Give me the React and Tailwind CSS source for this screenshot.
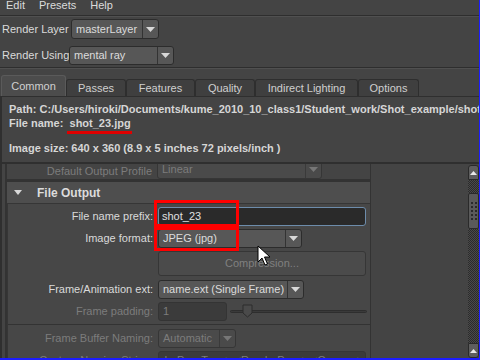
import React from 'react';

const font = { fontFamily: '"Liberation Sans", Arial, sans-serif' };

const Arrow = ({ dim }) => (
  <svg width="9" height="5" viewBox="0 0 9 5">
    <path d="M0 0 H9 L4.5 5 Z" fill={dim ? '#777' : '#d8d8d8'} />
  </svg>
);

const Dropdown = ({ value, width, dim, h = 'h-[19px]' }) => (
  <div
    className={`flex shrink-0 ${h} ${width} rounded-[3px] border ${
      dim ? 'border-[#363636] bg-[#4a4a4a] text-[#7c7c7c]' : 'border-[#2c2c2c] bg-[#575757] text-[#dcdcdc]'
    }`}
  >
    <div className="flex flex-1 items-center overflow-hidden whitespace-nowrap pl-[4px]">{value}</div>
    <div className={`flex w-[16px] items-center justify-center border-l ${dim ? 'border-[#3a3a3a]' : 'border-[#333]'}`}>
      <Arrow dim={dim} />
    </div>
  </div>
);

const Row = ({ label, dim, children, className = '' }) => (
  <div className={`flex shrink-0 items-center ${className}`}>
    <div className={`w-[146px] shrink-0 whitespace-nowrap pr-[1px] text-right ${dim ? 'text-[#7c7c7c]' : 'text-[#dadada]'}`}>{label}</div>
    <div className="ml-[4px] flex flex-1 items-center">{children}</div>
  </div>
);

const tabs = [
  ['Common', 'w-[65px]'],
  ['Passes', 'w-[60px]'],
  ['Features', 'w-[69px]'],
  ['Quality', 'w-[60px]'],
  ['Indirect Lighting', 'w-[103px]'],
  ['Options', 'w-[61px]'],
];

export default function App() {
  return (
    <div
      style={font}
      className="relative flex h-[360px] w-[480px] flex-col overflow-hidden border-r border-b-2 border-[#1d1dff] bg-[#444] text-[11px] text-[#dadada]"
    >
      {/* menu */}
      <div className="flex h-[16px] shrink-0 items-start gap-[14px] border-b border-[#2e2e2e] pl-[6px] text-[#dcdcdc]">
        <span className="leading-[11px]">Edit</span>
        <span className="leading-[11px]">Presets</span>
        <span className="leading-[11px]">Help</span>
      </div>

      {/* render layer / using */}
      <div className="flex shrink-0 flex-col gap-[7px] border-t border-[#505050] pt-[2px] pb-[2px]">
        <div className="flex items-center">
          <span className="w-[71px] shrink-0 whitespace-nowrap pl-[2px]">Render Layer</span>
          <Dropdown value="masterLayer" width="w-[88px]" h="h-[20px]" />
        </div>
        <div className="flex items-center">
          <span className="w-[69px] shrink-0 whitespace-nowrap pl-[2px]">Render Using</span>
          <Dropdown value="mental ray" width="w-[105px]" />
        </div>
      </div>
      <div className="h-[1px] shrink-0 bg-[#2e2e2e]" />
      <div className="h-[1px] shrink-0 bg-[#505050]" />

      {/* tabs */}
      <div className="flex h-[27px] shrink-0 items-end pl-[1px]">
        {tabs.map(([t, w], i) => (
          <div
            key={t}
            className={`flex ${w} items-center justify-center whitespace-nowrap rounded-t-[3px] border border-b-0 ${
              i === 0
                ? 'h-[21px] border-[#5a5a5a] bg-[#4c4c4c] text-[#d0d0d0]'
                : 'h-[17px] border-[#2e2e2e] bg-[#3f3f3f] text-[#cfcfcf]'
            }`}
          >
            {t}
          </div>
        ))}
      </div>

      {/* content */}
      <div className="flex min-h-0 flex-1 flex-col border-l-2 border-t border-[#2f2f2f] bg-[#444]">
        <div className="flex shrink-0 flex-col pl-[7px] pt-[6px] font-bold text-[#d6d6d6]">
          <div className="whitespace-nowrap leading-[13px]">
            Path: C:/Users/hiroki/Documents/kume_2010_10_class1/Student_work/Shot_example/shot_23.jpg
          </div>
          <div className="mt-[1px] whitespace-nowrap leading-[13px]">
            File name:&nbsp;&nbsp;
            <span className="relative">
              shot_23.jpg
              <span className="absolute -left-[3px] -right-[1px] top-[14px] h-[3px] bg-[#e00000]" />
            </span>
          </div>
          <div className="mt-[12px] whitespace-nowrap leading-[13px]">
            Image size: 640 x 360 (8.9 x 5 inches 72 pixels/inch )
          </div>
        </div>

        {/* scroll area */}
        <div className="mt-[7px] flex min-h-0 flex-1 border-t-2 border-[#2f2f2f] pl-[3px]">
          <div className="flex w-[366px] shrink-0 flex-col overflow-hidden border-l-2 border-r border-[#333] bg-[#444]">
            <Row label="Default Output Profile" dim className="h-[15px]">
              <div className="-mt-[4px] w-[165px]">
                <Dropdown value="Linear" width="w-[165px]" dim />
              </div>
            </Row>
            <div className="h-[3px] shrink-0 bg-[#333]" />
            <div className="flex h-[21px] shrink-0 items-center bg-[#4e4e4e] font-bold text-[12px] text-[#dcdcdc]">
              <svg width="8" height="5" viewBox="0 0 8 5" className="ml-[7px]">
                <path d="M0 0 H8 L4 5 Z" fill="#d8d8d8" />
              </svg>
              <span className="ml-[15px]">File Output</span>
            </div>
            <div className="flex shrink-0 flex-col border-l border-t border-[#363636] bg-[#474747] pt-[3px]">
              <Row label="File name prefix:" className="h-[19px]">
                <div className="flex h-[19px] w-[208px] items-center rounded-[3px] border border-[#6d8cab] bg-[#2a2a2a] pl-[3px] text-[#e0e0e0]">
                  shot_23
                </div>
              </Row>
              <Row label="Image format:" className="mt-[3px] h-[19px]">
                <Dropdown value="JPEG (jpg)" width="w-[144px]" />
              </Row>
              <Row label="" className="mt-[3px] h-[25px]">
                <div className="flex h-[25px] w-[208px] items-center justify-center rounded-[3px] border border-[#363636] bg-[#4b4b4b] text-[#808080]">
                  Compression...
                </div>
              </Row>
              <Row label="Frame/Animation ext:" className="mt-[4px] h-[19px]">
                <Dropdown value="name.ext (Single Frame)" width="w-[146px]" />
              </Row>
              <Row label="Frame padding:" dim className="mt-[3px] h-[19px]">
                <div className="flex h-[19px] w-[69px] items-center rounded-[3px] border border-[#343434] bg-[#3b3b3b] pl-[4px] text-[#7c7c7c]">
                  1
                </div>
                <div className="relative ml-[3px] flex h-[19px] w-[137px] items-center">
                  <div className="h-[3px] w-full rounded-full border border-[#2e2e2e] bg-[#3a3a3a]" />
                  <svg width="11" height="14" viewBox="0 0 11 14" className="absolute left-[12px] top-[2px]">
                    <path d="M1 1 H10 V9 L5.5 13 L1 9 Z" fill="#4a4a4a" stroke="#2c2c2c" />
                  </svg>
                </div>
              </Row>
              <div className="mt-[3px] h-[1px] shrink-0 bg-[#333]" />
              <Row label="Frame Buffer Naming:" dim className="mt-[4px] h-[19px]">
                <Dropdown value="Automatic" width="w-[78px]" dim />
              </Row>
              <Row label="Custom Naming String:" dim className="mt-[3px] h-[19px]">
                <div className="flex h-[19px] w-[208px] items-center overflow-hidden whitespace-nowrap rounded-[3px] border border-[#363636] bg-[#3b3b3b] pl-[2px] text-[#7c7c7c]">
                  derPassType&gt;:&lt;RenderPass&gt;.&lt;Camera&gt;
                </div>
              </Row>
            </div>
          </div>
          <div className="flex-1" />
          {/* scrollbar */}
          <div className="flex w-[11px] shrink-0 flex-col pt-[1px]">
            <div className="flex h-[15px] shrink-0 items-center justify-center rounded-t-[3px] border border-[#2a2a2a] bg-[#5e5e5e]">
              <svg width="7" height="4" viewBox="0 0 7 4">
                <path d="M0 4 L3.5 0 L7 4 Z" fill="#e8e8e8" />
              </svg>
            </div>
            <div className="h-[13px] shrink-0 bg-[repeating-conic-gradient(#2b2b2b_0_25%,#4a4a4a_0_50%)] bg-[length:2px_2px]" />
            <div className="grid h-[36px] shrink-0 grid-cols-2 content-center gap-x-[2px] gap-y-[2px] rounded-[2px] border border-[#2a2a2a] bg-[#5a5a5a] px-[2px]">
              {Array.from({ length: 10 }).map((_, i) => (
                <div key={i} className="h-[2px] w-[2px] bg-[#2a2a2a]" />
              ))}
            </div>
            <div className="flex-1 bg-[repeating-conic-gradient(#2b2b2b_0_25%,#4a4a4a_0_50%)] bg-[length:2px_2px]" />
            <div className="flex h-[15px] shrink-0 items-center justify-center rounded-b-[3px] border border-[#2a2a2a] bg-[#5e5e5e]">
              <svg width="7" height="4" viewBox="0 0 7 4">
                <path d="M0 4 L3.5 0 L7 4 Z" fill="#e8e8e8" />
              </svg>
            </div>
          </div>
        </div>
      </div>

      {/* annotations */}
      <div className="pointer-events-none absolute left-[154px] top-[200px] h-[27px] w-[85px] border-[3px] border-[#ff0000]" />
      <div className="pointer-events-none absolute left-[154px] top-[227px] h-[24px] w-[85px] border-[3px] border-[#ff0000]" />
      <svg width="14" height="22" viewBox="0 0 14 22" className="pointer-events-none absolute left-[257px] top-[245px]">
        <path d="M1 1 V17 L5 13 L8 20 L10.5 19 L7.5 12 L13 12 Z" fill="#fff" stroke="#000" strokeWidth="1" />
      </svg>
    </div>
  );
}
